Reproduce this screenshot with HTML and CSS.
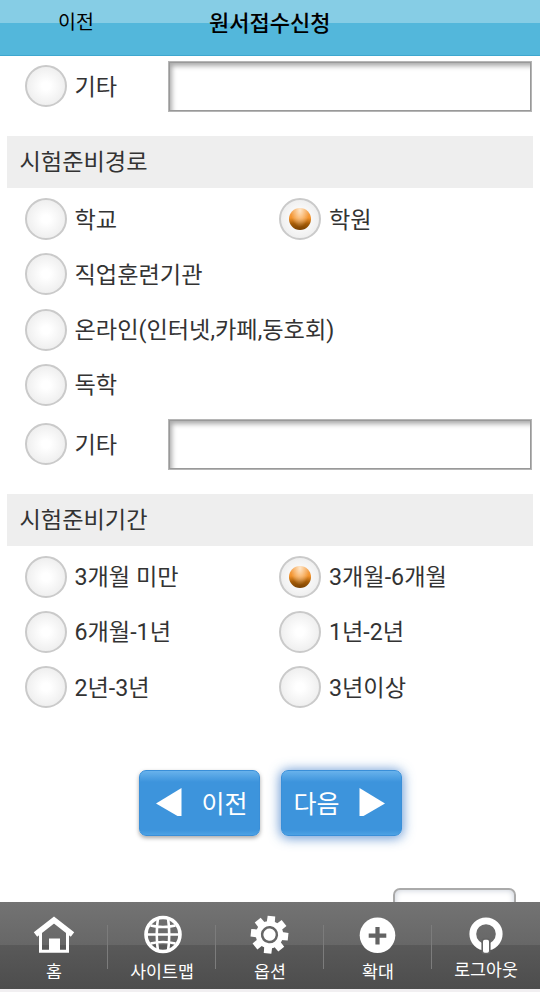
FILE: index.html
```html
<!doctype html>
<html lang="ko">
<head>
    <meta charset="UTF-8">
    <meta name="viewport" content="width=device-width, initial-scale=1.0">
    <title>원서접수신청</title>
    <link rel="stylesheet" href="styles.css">
</head>
<body>
    <header class="topbar">
        <a class="back">이전</a>
        <h1>원서접수신청</h1>
    </header>

    <main class="content">
        <div class="row etc first">
            <label><i class="radio"></i><span>기타</span></label>
            <input class="text" type="text">
        </div>

        <h2>시험준비경로</h2>
        <div class="options">
            <div class="row">
                <label><i class="radio"></i><span>학교</span></label>
                <label><i class="radio on"></i><span>학원</span></label>
            </div>
            <div class="row"><label><i class="radio"></i><span>직업훈련기관</span></label></div>
            <div class="row"><label><i class="radio"></i><span>온라인(인터넷,카페,동호회)</span></label></div>
            <div class="row"><label><i class="radio"></i><span>독학</span></label></div>
            <div class="row etc">
                <label><i class="radio"></i><span>기타</span></label>
                <input class="text" type="text">
            </div>
        </div>

        <h2>시험준비기간</h2>
        <div class="options">
            <div class="row">
                <label><i class="radio"></i><span>3개월 미만</span></label>
                <label><i class="radio on"></i><span>3개월-6개월</span></label>
            </div>
            <div class="row">
                <label><i class="radio"></i><span>6개월-1년</span></label>
                <label><i class="radio"></i><span>1년-2년</span></label>
            </div>
            <div class="row">
                <label><i class="radio"></i><span>2년-3년</span></label>
                <label><i class="radio"></i><span>3년이상</span></label>
            </div>
        </div>

        <div class="buttons">
            <button class="btn">
                <svg width="26" height="28" viewBox="0 0 26 28"><path d="M0 15.500 25.500 0V28H21.500Z" fill="#fff"/></svg>
                <span>이전</span>
            </button>
            <button class="btn next">
                <span>다음</span>
                <svg width="26" height="28" viewBox="0 0 26 28"><path d="M.5 0 26 15.500 4.500 28H.5Z" fill="#fff"/></svg>
            </button>
        </div>

        <div class="select">
            <svg width="4" height="3" viewBox="0 0 4 3"><path d="M2 0 4 3H0Z" fill="#3b8ede"/></svg>
        </div>
    </main>

    <nav class="tabbar">
        <a>
            <svg width="42" height="40" viewBox="0 0 42 40">
                <path d="M2.500 19.500 21 5 39.500 19.500" fill="none" stroke="#fff" stroke-width="5.500"/>
                <path d="M7.500 16V36.300H34.500V16" fill="none" stroke="#fff" stroke-width="3"/>
                <path d="M16 23.500H27V37H16Z" fill="#fff"/>
            </svg>
            <span>홈</span>
        </a>
        <a>
            <svg width="42" height="40" viewBox="0 0 42 40" fill="none" stroke="#fff">
                <circle cx="22" cy="19.500" r="17" stroke-width="3.600"/>
                <path d="M17 3Q14.500 19.500 17 36M27 3Q29.500 19.500 27 36M5 19.500H39M9.500 10.500Q22 13.500 34.500 10.500M9.500 28.500Q22 25.500 34.500 28.500" stroke-width="2.600"/>
            </svg>
            <span>사이트맵</span>
        </a>
        <a>
            <svg width="42" height="40" viewBox="0 0 42 40">
                <g transform="translate(20.500 19.700) rotate(6)">
                    <circle r="13.700" fill="#fff"/>
                    <g fill="#fff">
                        <path id="tooth" d="M-4-12-3.800-18.700H3.800L4-12Z"/>
                        <use href="#tooth" transform="rotate(45)"/>
                        <use href="#tooth" transform="rotate(90)"/>
                        <use href="#tooth" transform="rotate(135)"/>
                        <use href="#tooth" transform="rotate(180)"/>
                        <use href="#tooth" transform="rotate(225)"/>
                        <use href="#tooth" transform="rotate(270)"/>
                        <use href="#tooth" transform="rotate(315)"/>
                    </g>
                    <circle r="7.400" fill="none" stroke="#666" stroke-width="2.500"/>
                </g>
            </svg>
            <span>옵션</span>
        </a>
        <a>
            <svg width="42" height="40" viewBox="0 0 42 40">
                <circle cx="20.500" cy="20.300" r="17.800" fill="#fff"/>
                <path d="M20.500 11.900V29.500M11.700 20.700H29.300" stroke="#636363" stroke-width="4.200"/>
            </svg>
            <span>확대</span>
        </a>
        <a class="logout">
            <svg width="42" height="40" viewBox="0 0 42 40">
                <circle cx="21" cy="19" r="13.200" fill="none" stroke="#fff" stroke-width="6.800"/>
                <rect x="17.200" y="24" width="7.600" height="14.500" rx="2.500" fill="#fff" stroke="#636363" stroke-width="1.600"/>
            </svg>
            <span>로그아웃</span>
        </a>
    </nav>
</body>
</html>
```
FILE: styles.css
```css
* {
    margin: 0;
    padding: 0;
    box-sizing: border-box;
}
body {
    display: flex;
    flex-direction: column;
    height: 992px;
    padding-bottom: 3px;
    overflow: hidden;
    background: #f1eff1;
    color: #333;
    font-family: Roboto, "Noto Sans CJK KR", sans-serif;
    font-size: 23.2px;
}
.topbar {
    display: flex;
    height: 56px;
    padding-left: 58px;
    background: linear-gradient(#86cde5 23px, #53b7db 23px);
    border-bottom: 1px solid #3ea7cf;
    color: #000;
}
.back {
    width: 151px;
    font-size: 19.5px;
    line-height: 45px;
}
h1 {
    font-size: 22px;
    font-weight: 500;
    line-height: 47px;
}
.content {
    flex: 1;
    min-height: 0;
    overflow: hidden;
    background: #fff;
}
h2 {
    height: 52px;
    margin: 0 7px;
    padding-left: 12.5px;
    background: #eee;
    font-size: 23.2px;
    font-weight: 400;
    line-height: 53px;
}
.options {
    padding-top: 3.5px;
}
.row {
    display: flex;
    align-items: center;
    height: 55.25px;
    padding-left: 24.5px;
}
.row label {
    display: flex;
    align-items: center;
    gap: 8px;
    width: 254.5px;
    white-space: nowrap;
}
.row label span {
    padding-bottom: 3px;
}
.row.etc {
    height: 63.5px;
    margin-bottom: 17.5px;
    padding-right: 8px;
}
.row.etc label {
    width: 143.5px;
}
.row.first {
    height: 60px;
    margin-bottom: 20px;
}
.radio {
    display: flex;
    flex: none;
    align-items: center;
    justify-content: center;
    width: 42px;
    height: 42px;
    border: 2px solid #cacaca;
    border-radius: 50%;
    background: radial-gradient(#fff 15%, #eee 75%);
}
.radio.on::after {
    content: "";
    width: 22px;
    height: 22px;
    border-radius: 50%;
    background: radial-gradient(ellipse at 50% 10%, #ffe6c8 0%, rgba(255, 215, 170, 0.6) 30%, transparent 60%), linear-gradient(#f2a455 0%, #f3932c 45%, #a35a06 72%, #784103 100%);
}
.text {
    flex: 1;
    height: 51px;
    border: 1px solid #b5b5b5;
    background: #fff;
    box-shadow: inset 0 0 0 1px #999, inset 4px 5px 5px -1px #aaa;
}
.buttons {
    display: flex;
    justify-content: center;
    gap: 21px;
    margin-top: 55.5px;
}
.btn {
    display: flex;
    align-items: center;
    justify-content: space-between;
    width: 121px;
    height: 66px;
    padding: 0 11px 2px 16px;
    border: 1px solid #3a8fd8;
    border-radius: 7px;
    background: linear-gradient(#68b2ec 0, #3d94dc 11px, #3d94dc 59px, #4da2e4 100%);
    box-shadow: 0 2px 4px rgba(0, 0, 0, 0.35);
    color: #fff;
    font-family: inherit;
    font-size: 25px;
}
.btn span {
    padding-bottom: 1px;
}
.btn.next {
    padding: 0 16px 2px 12px;
    box-shadow: 0 1px 12px 1px rgba(50, 115, 195, 0.75);
}
.select {
    width: 123px;
    height: 48px;
    margin: 51.5px 24px 0 auto;
    padding: 11px 0 0 100px;
    border: 2px solid #aaa;
    border-radius: 7px;
    box-shadow: inset 0 0 6px #c5cbd5;
    line-height: 0;
}
.tabbar {
    display: flex;
    height: 87px;
    background: linear-gradient(#737373 0, #676767 43px, #595959 43px, #4d4d4d 100%);
    color: #fff;
    font-size: 17.3px;
}
.tabbar a {
    display: flex;
    flex: 1;
    flex-direction: column;
    align-items: center;
    padding-top: 13px;
    background: linear-gradient(#7c7c7c, #7c7c7c) right 23px / 1px 44px no-repeat;
}
.tabbar a:last-child {
    background: none;
}
.tabbar span {
    margin-top: 4.5px;
    line-height: 25px;
}
.tabbar .logout span {
    margin-top: 3px;
}
```
